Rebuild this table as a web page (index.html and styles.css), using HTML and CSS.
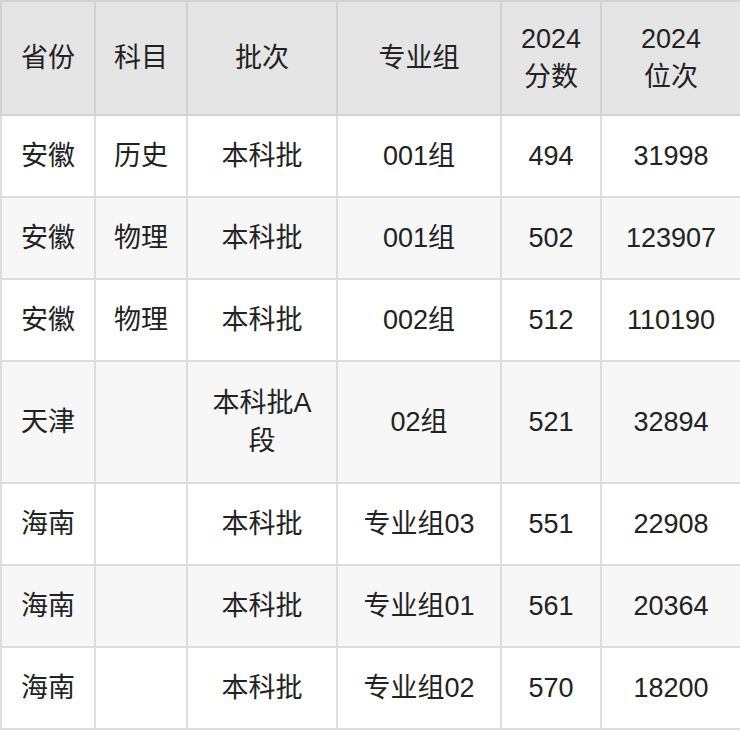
FILE: index.html
```html
<!DOCTYPE html>
<html lang="zh-CN">
<head>
<meta charset="utf-8">
<link rel="stylesheet" href="styles.css">
</head>
<body>
<table class="score-table">
  <colgroup>
    <col class="c1"><col class="c2"><col class="c3"><col class="c4"><col class="c5"><col class="c6">
  </colgroup>
  <thead>
    <tr class="head">
      <th>省份</th><th>科目</th><th>批次</th><th>专业组</th><th>2024<br>分数</th><th>2024<br>位次</th>
    </tr>
  </thead>
  <tbody>
    <tr class="row"><td>安徽</td><td>历史</td><td>本科批</td><td>001组</td><td>494</td><td>31998</td></tr>
    <tr class="row alt"><td>安徽</td><td>物理</td><td>本科批</td><td>001组</td><td>502</td><td>123907</td></tr>
    <tr class="row"><td>安徽</td><td>物理</td><td>本科批</td><td>002组</td><td>512</td><td>110190</td></tr>
    <tr class="row alt tall"><td>天津</td><td></td><td>本科批A<br>段</td><td>02组</td><td>521</td><td>32894</td></tr>
    <tr class="row"><td>海南</td><td></td><td>本科批</td><td>专业组03</td><td>551</td><td>22908</td></tr>
    <tr class="row alt"><td>海南</td><td></td><td>本科批</td><td>专业组01</td><td>561</td><td>20364</td></tr>
    <tr class="row"><td>海南</td><td></td><td>本科批</td><td>专业组02</td><td>570</td><td>18200</td></tr>
  </tbody>
</table>
</body>
</html>
```
FILE: styles.css
```css
html, body {
  margin: 0;
  padding: 0;
  background: #ffffff;
}
.score-table {
  border-collapse: collapse;
  table-layout: fixed;
  width: 740px;
  font-family: "Liberation Sans", "Noto Sans CJK SC", sans-serif;
  font-size: 27px;
  line-height: 38px;
  color: #222222;
}
.c1 { width: 94px; }
.c2 { width: 92px; }
.c3 { width: 150px; }
.c4 { width: 164px; }
.c5 { width: 100px; }
.c6 { width: 140px; }
.score-table th,
.score-table td {
  border: 2px solid #dddddd;
  padding: 0 2px;
  text-align: center;
  vertical-align: middle;
  font-weight: normal;
}
.head th {
  background: #e5e5e5;
  border-color: #d2d2d2;
  height: 114px;
  box-sizing: border-box;
}
.row td {
  height: 82px;
  box-sizing: border-box;
  background: #ffffff;
}
.row.alt td {
  background: #f7f7f7;
}
.row.tall td {
  height: 122px;
}
```
